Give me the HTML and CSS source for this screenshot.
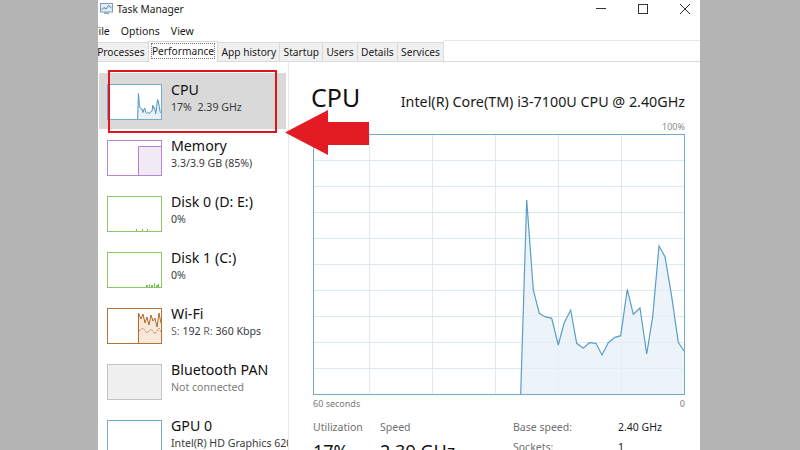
FILE: index.html
```html
<!DOCTYPE html>
<html lang="en">
<head>
<meta charset="utf-8">
<title>Task Manager</title>
<link rel="stylesheet" href="styles.css">
</head>
<body>
<div class="band"></div>
<div class="window">
  <div class="titlebar">
    <svg class="app-icon" width="13" height="11" viewBox="0 0 13 11">
      <rect x="0.5" y="0.5" width="12" height="8.5" fill="#e4edf5" stroke="#7f9bb5"/>
      <polyline points="1.5,7 4,4.5 6,6 8.5,2.5 11.5,5" fill="none" stroke="#3f7fb5" stroke-width="1"/>
      <rect x="4" y="9.5" width="5" height="1.5" fill="#8aa3ba"/>
    </svg>
    <span class="title">Task Manager</span>
    <div class="controls">
      <svg width="10" height="10" viewBox="0 0 10 10"><line x1="0" y1="4.5" x2="10" y2="4.5" stroke="#333" stroke-width="1"/></svg>
      <svg width="10" height="10" viewBox="0 0 10 10"><rect x="0.5" y="0.5" width="9" height="9" fill="none" stroke="#333" stroke-width="1"/></svg>
      <svg width="10" height="10" viewBox="0 0 10 10"><path d="M0 0 L10 10 M10 0 L0 10" stroke="#333" stroke-width="1"/></svg>
    </div>
  </div>
  <div class="menubar">
    <span>File</span><span>Options</span><span>View</span>
  </div>
  <div class="tabs">
    <div class="tab">Processes</div>
    <div class="tab active"><span>Performance</span></div>
    <div class="tab">App history</div>
    <div class="tab">Startup</div>
    <div class="tab">Users</div>
    <div class="tab">Details</div>
    <div class="tab">Services</div>
    <div class="tab-fill"></div>
  </div>
  <div class="main">
    <div class="sidebar">
      <div class="item selected">
        <div class="thumb thumb-cpu">
          <svg width="53" height="34" viewBox="0 0 370 259" preserveAspectRatio="none">
            <polygon points="206.7,259 212.7,65 219.3,155 225.3,178.3 231,181.7 237.7,183.3 244.3,210 250,188.3 256.7,175 262.7,208.3 269.3,213.3 275.3,207.7 282,208.3 288,220 294.3,207.7 301,202.3 306.7,200.7 313.3,154.3 319.3,179.3 326,173 332.7,219 338.7,181.7 345,111 351,121.7 357.7,161.7 364.3,207.3 370,216 370,259" fill="#eaf2f8"/>
            <polyline points="206.7,259 212.7,65 219.3,155 225.3,178.3 231,181.7 237.7,183.3 244.3,210 250,188.3 256.7,175 262.7,208.3 269.3,213.3 275.3,207.7 282,208.3 288,220 294.3,207.7 301,202.3 306.7,200.7 313.3,154.3 319.3,179.3 326,173 332.7,219 338.7,181.7 345,111 351,121.7 357.7,161.7 364.3,207.3 370,216" fill="none" stroke="#4f95c2" stroke-width="1" vector-effect="non-scaling-stroke"/>
          </svg>
        </div>
        <div class="item-text">
          <div class="name">CPU</div>
          <div class="sub">17%&nbsp;&nbsp;2.39 GHz</div>
        </div>
      </div>
      <div class="item">
        <div class="thumb thumb-mem">
          <svg width="53" height="34" viewBox="0 0 53 34">
            <rect x="30" y="5" width="24" height="30" fill="#f1eaf4"/>
            <path d="M30.5 34 V5.5 H53" fill="none" stroke="#b57fcc" stroke-width="1"/>
          </svg>
        </div>
        <div class="item-text">
          <div class="name">Memory</div>
          <div class="sub">3.3/3.9 GB (85%)</div>
        </div>
      </div>
      <div class="item">
        <div class="thumb thumb-disk">
          <svg width="53" height="34" viewBox="0 0 53 34">
            <rect x="28" y="32" width="1" height="2" fill="#7fbf57"/>
            <rect x="34" y="32" width="1" height="2" fill="#7fbf57"/>
            <rect x="39" y="32" width="1" height="2" fill="#7fbf57"/>
          </svg>
        </div>
        <div class="item-text">
          <div class="name">Disk 0 (D: E:)</div>
          <div class="sub">0%</div>
        </div>
      </div>
      <div class="item">
        <div class="thumb thumb-disk">
          <svg width="53" height="34" viewBox="0 0 53 34">
            <rect x="38" y="32" width="2" height="2" fill="#7fbf57"/>
            <rect x="41" y="31" width="1" height="3" fill="#7fbf57"/>
            <rect x="43" y="32" width="2" height="2" fill="#7fbf57"/>
            <rect x="46" y="30" width="1" height="4" fill="#7fbf57"/>
            <rect x="48" y="32" width="2" height="2" fill="#7fbf57"/>
            <rect x="50" y="31" width="1" height="3" fill="#7fbf57"/>
          </svg>
        </div>
        <div class="item-text">
          <div class="name">Disk 1 (C:)</div>
          <div class="sub">0%</div>
        </div>
      </div>
      <div class="item">
        <div class="thumb thumb-wifi">
          <svg width="53" height="34" viewBox="0 0 53 34">
            <polygon points="30.5,34 30.5,4 33,10 35,5 37,14 39,8 41,16 43,6 45,12 47,9 49,18 51,4 53,14 53,34" fill="#f8e8da"/>
            <polyline points="30.5,34 30.5,4 33,10 35,5 37,14 39,8 41,16 43,6 45,12 47,9 49,18 51,4 53,14" fill="none" stroke="#b06a2c" stroke-width="1"/>
            <polyline points="31,22 35,19 39,24 43,20 47,25 51,19 53,23" fill="none" stroke="#c58a55" stroke-width="1" stroke-dasharray="2 1"/>
          </svg>
        </div>
        <div class="item-text">
          <div class="name">Wi-Fi</div>
          <div class="sub"><span class="dim">S:</span> 192 <span class="dim">R:</span> 360 Kbps</div>
        </div>
      </div>
      <div class="item">
        <div class="thumb thumb-bt"></div>
        <div class="item-text">
          <div class="name">Bluetooth PAN</div>
          <div class="sub light">Not connected</div>
        </div>
      </div>
      <div class="item">
        <div class="thumb thumb-gpu"></div>
        <div class="item-text">
          <div class="name">GPU 0</div>
          <div class="sub">Intel(R) HD Graphics 620</div>
        </div>
      </div>
    </div>
    <div class="detail">
      <div class="header">
        <h1 class="heading">CPU</h1>
        <div class="model">Intel(R) Core(TM) i3-7100U CPU @ 2.40GHz</div>
      </div>
      <div class="scale">100%</div>
      <div class="chart">
        <svg width="370" height="259" viewBox="0 0 370 259">
          <g stroke="#dbe9f3" stroke-width="1">
            <line x1="55.5" y1="0" x2="55.5" y2="259"/>
            <line x1="118.5" y1="0" x2="118.5" y2="259"/>
            <line x1="181.5" y1="0" x2="181.5" y2="259"/>
            <line x1="244.5" y1="0" x2="244.5" y2="259"/>
            <line x1="307.5" y1="0" x2="307.5" y2="259"/>
            <line x1="0" y1="25.5" x2="370" y2="25.5"/>
            <line x1="0" y1="51.5" x2="370" y2="51.5"/>
            <line x1="0" y1="77.5" x2="370" y2="77.5"/>
            <line x1="0" y1="103.5" x2="370" y2="103.5"/>
            <line x1="0" y1="129.5" x2="370" y2="129.5"/>
            <line x1="0" y1="155.5" x2="370" y2="155.5"/>
            <line x1="0" y1="181.5" x2="370" y2="181.5"/>
            <line x1="0" y1="207.5" x2="370" y2="207.5"/>
            <line x1="0" y1="233.5" x2="370" y2="233.5"/>
          </g>
          <polygon points="206.7,259 212.7,65 219.3,155 225.3,178.3 231,181.7 237.7,183.3 244.3,210 250,188.3 256.7,175 262.7,208.3 269.3,213.3 275.3,207.7 282,208.3 288,220 294.3,207.7 301,202.3 306.7,200.7 313.3,154.3 319.3,179.3 326,173 332.7,219 338.7,181.7 345,111 351,121.7 357.7,161.7 364.3,207.3 370,216 370,259" fill="#e6f0f8" fill-opacity="0.75"/>
          <polyline points="206.7,259 212.7,65 219.3,155 225.3,178.3 231,181.7 237.7,183.3 244.3,210 250,188.3 256.7,175 262.7,208.3 269.3,213.3 275.3,207.7 282,208.3 288,220 294.3,207.7 301,202.3 306.7,200.7 313.3,154.3 319.3,179.3 326,173 332.7,219 338.7,181.7 345,111 351,121.7 357.7,161.7 364.3,207.3 370,216" fill="none" stroke="#5a9dc6" stroke-width="1.2"/>
        </svg>
      </div>
      <div class="axis"><span>60 seconds</span><span>0</span></div>
      <div class="stats">
        <div class="stat stat-util">
          <div class="stat-label">Utilization</div>
          <div class="stat-value">17%</div>
        </div>
        <div class="stat stat-speed">
          <div class="stat-label">Speed</div>
          <div class="stat-value">2.39 GHz</div>
        </div>
        <div class="specs">
          <span class="spec-label">Base speed:</span><span class="spec-value">2.40 GHz</span>
          <span class="spec-label">Sockets:</span><span class="spec-value">1</span>
        </div>
      </div>
    </div>
  </div>
</div>
<div class="band band-right"></div>

<div class="annot-box"></div>
<svg class="annot-arrow" width="90" height="50" viewBox="280 108 90 50">
  <polygon points="285,132.5 328,110 328,122 369,122 369,145 328,145 328,155" fill="#e31b23"/>
</svg>
</body>
</html>
```

FILE: styles.css
```css
* {
  box-sizing: border-box;
}

html, body {
  margin: 0;
  padding: 0;
}

body {
  position: relative;
  width: 800px;
  height: 450px;
  overflow: hidden;
  display: flex;
  background: #b4b4b4;
  font-family: "Noto Sans", sans-serif;
  color: #111;
}

.band {
  flex: none;
  width: 98px;
  background: #b4b4b4;
}

.band-right {
  width: 100px;
}

.window {
  flex: none;
  width: 602px;
  height: 450px;
  background: #fff;
  display: flex;
  flex-direction: column;
  overflow: hidden;
}

/* title bar */
.titlebar {
  flex: none;
  height: 17px;
  display: flex;
  align-items: center;
  padding-left: 2px;
  font-size: 10.2px;
}

.app-icon {
  display: block;
  margin-right: 4px;
}

.title {
  color: #1a1a1a;
}

.controls {
  margin-left: auto;
  display: flex;
  align-items: center;
  gap: 32px;
  padding-right: 10px;
}

.controls svg {
  display: block;
}

/* menu */
.menubar {
  flex: none;
  height: 23px;
  display: flex;
  gap: 11px;
  padding-top: 7px;
  margin-left: -5px;
  font-size: 10.5px;
  line-height: 15px;
  color: #1a1a1a;
}

/* tabs */
.tabs {
  flex: none;
  height: 22px;
  display: flex;
  align-items: flex-end;
  margin-left: -5px;
  border-bottom: 1px solid #dadada;
  font-size: 10.2px;
}

.tab {
  height: 19px;
  line-height: 18px;
  padding: 0 3.2px;
  background: #f0f0f0;
  border: 1px solid #dadada;
  border-bottom: none;
  margin-right: -1px;
  color: #1a1a1a;
  white-space: nowrap;
}

.tab.active {
  position: relative;
  z-index: 1;
  height: 21px;
  line-height: 19px;
  margin-bottom: -1px;
  background: #fff;
}

.tab.active span {
  outline: 1px dotted #777;
  outline-offset: 0px;
}

.tab-fill {
  flex: 1;
  align-self: stretch;
  border-top: 1px solid #e6e6e6;
  margin-left: 1px;
}

/* main */
.main {
  flex: 1;
  display: flex;
  min-height: 0;
}

.sidebar {
  flex: none;
  width: 191px;
  padding: 11px 2px 0 1px;
  border-right: 1px solid #e8e8e8;
  overflow: hidden;
}

.item {
  height: 56px;
  display: flex;
  align-items: flex-start;
  padding: 11px 0 0 8px;
}

.item.selected {
  background: #d9d9d9;
}

.thumb {
  flex: none;
  width: 55px;
  height: 36px;
  margin-right: 9px;
  border: 1px solid;
  background: #fff;
}

.thumb svg {
  display: block;
}

.thumb-cpu {
  border-color: #74acd0;
}

.thumb-mem {
  border-color: #b987cf;
}

.thumb-disk {
  border-color: #8bc667;
}

.thumb-wifi {
  border-color: #b57236;
}

.thumb-bt {
  border-color: #c4c4c4;
  background: #f0f0f0;
}

.thumb-gpu {
  border-color: #74acd0;
}

.item-text {
  margin-top: -3px;
  white-space: nowrap;
}

.name {
  font-size: 14.2px;
  line-height: 18px;
  color: #111;
}

.sub {
  margin-top: 1px;
  font-size: 10.6px;
  line-height: 15px;
  color: #3a3a3a;
}

.sub .dim {
  color: #6a6a6a;
}

.sub.light {
  color: #7a7a7a;
}

/* detail */
.detail {
  flex: 1;
  padding: 20px 15px 0 24px;
  min-width: 0;
}

.header {
  height: 30px;
  display: flex;
  justify-content: space-between;
  align-items: baseline;
}

.heading {
  margin: 0;
  margin-left: -2px;
  font-size: 25px;
  line-height: 30px;
  font-weight: 400;
  color: #111;
}

.model {
  font-size: 14.3px;
  color: #1a1a1a;
  white-space: nowrap;
}

.scale {
  margin-top: 9px;
  width: 372px;
  text-align: right;
  font-size: 9px;
  line-height: 12px;
  color: #8c8c8c;
}

.chart {
  margin-top: 1px;
  width: 372px;
  height: 261px;
  border: 1px solid #70a9ca;
  background: #fff;
}

.chart svg {
  display: block;
}

.axis {
  margin-top: 3px;
  width: 372px;
  display: flex;
  justify-content: space-between;
  font-size: 9px;
  line-height: 12px;
  color: #7a7a7a;
}

.stats {
  margin-top: 10px;
  display: flex;
  align-items: flex-start;
}

.stat-util {
  width: 67px;
}

.stat-speed {
  width: 133px;
}

.stat-label {
  font-size: 10.5px;
  line-height: 14px;
  color: #707070;
}

.stat-value {
  margin-top: 6px;
  font-size: 18px;
  line-height: 22px;
  color: #111;
}

.specs {
  margin-top: -1px;
  display: grid;
  grid-template-columns: 105px auto;
  row-gap: 4px;
  font-size: 10.5px;
  line-height: 16px;
}

.spec-label {
  color: #707070;
}

.spec-value {
  color: #1a1a1a;
}

/* annotation overlay */
.annot-box {
  position: absolute;
  left: 108px;
  top: 70px;
  width: 169px;
  height: 63px;
  border: 2px solid #e3141c;
}

.annot-arrow {
  position: absolute;
  left: 280px;
  top: 108px;
}
```
